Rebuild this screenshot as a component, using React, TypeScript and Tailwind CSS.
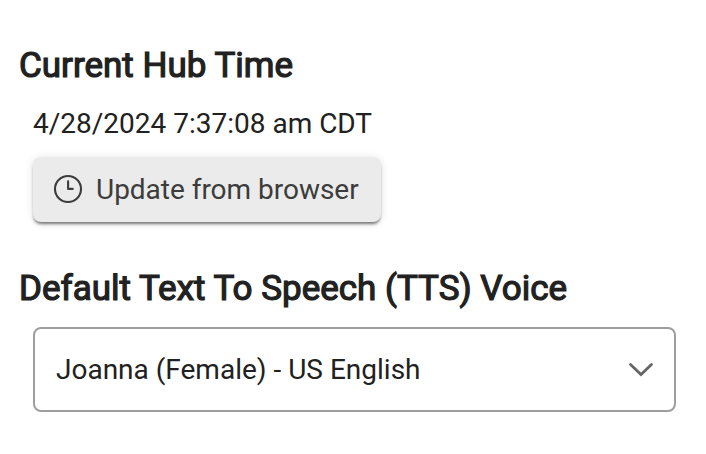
// Hub time and default voice settings
import { useState } from 'react';

const voices = [
  { id: 'joanna', label: 'Joanna (Female) - US English' },
];

export default function App() {
  const [voice] = useState(voices[0]);

  return (
    <main className="h-[454px] w-[706px] bg-white pl-[19px] pt-[46px] font-['Roboto',sans-serif] text-[#212121]">
      <section>
        <h2 className="text-[35px] leading-[40px] font-normal [-webkit-text-stroke:1.2px_#212121]">Current Hub Time</h2>
        <p className="ml-[14px] mt-[22px] text-[28px] leading-[32px]">4/28/2024 7:37:08 am CDT</p>
        <button className="ml-[14px] mt-[17px] flex h-[65px] w-[347.5px] items-center rounded-[8px] bg-[#ebebeb] pl-[20px] text-[28px] tracking-[-0.02px] text-[#3c3c3c] shadow-[0_3px_3px_-1px_rgba(0,0,0,0.5),0_1px_8px_rgba(0,0,0,0.12)]">
          <svg className="mb-px mr-[13px] h-[30px] w-[30px]" viewBox="0 0 30 30" fill="none" stroke="currentColor" strokeWidth="2.1" strokeLinecap="round" strokeLinejoin="round">
            <circle cx="15" cy="15" r="13" />
            <path d="M15.1 7.2V14.9H19.7" />
          </svg>
          Update from browser
        </button>
      </section>

      <section className="mt-[47px]">
        <h2 className="text-[35px] leading-[40px] font-normal tracking-[-0.01px] [-webkit-text-stroke:1.2px_#212121]">Default Text To Speech (TTS) Voice</h2>
        <button className="ml-[14px] mt-[18px] flex h-[85px] w-[643px] items-center justify-between rounded-[8px] border-2 border-[#9e9e9e] pl-[21px] pr-[20px] text-[28px]">
          {voice.label}
          <svg className="h-[16px] w-[26px]" viewBox="0 0 26 16" fill="none" stroke="#666" strokeWidth="2.8" strokeLinecap="round">
            <path d="M2.5 2.5L13 12.5L23.5 2.5" />
          </svg>
        </button>
      </section>
    </main>
  );
}
